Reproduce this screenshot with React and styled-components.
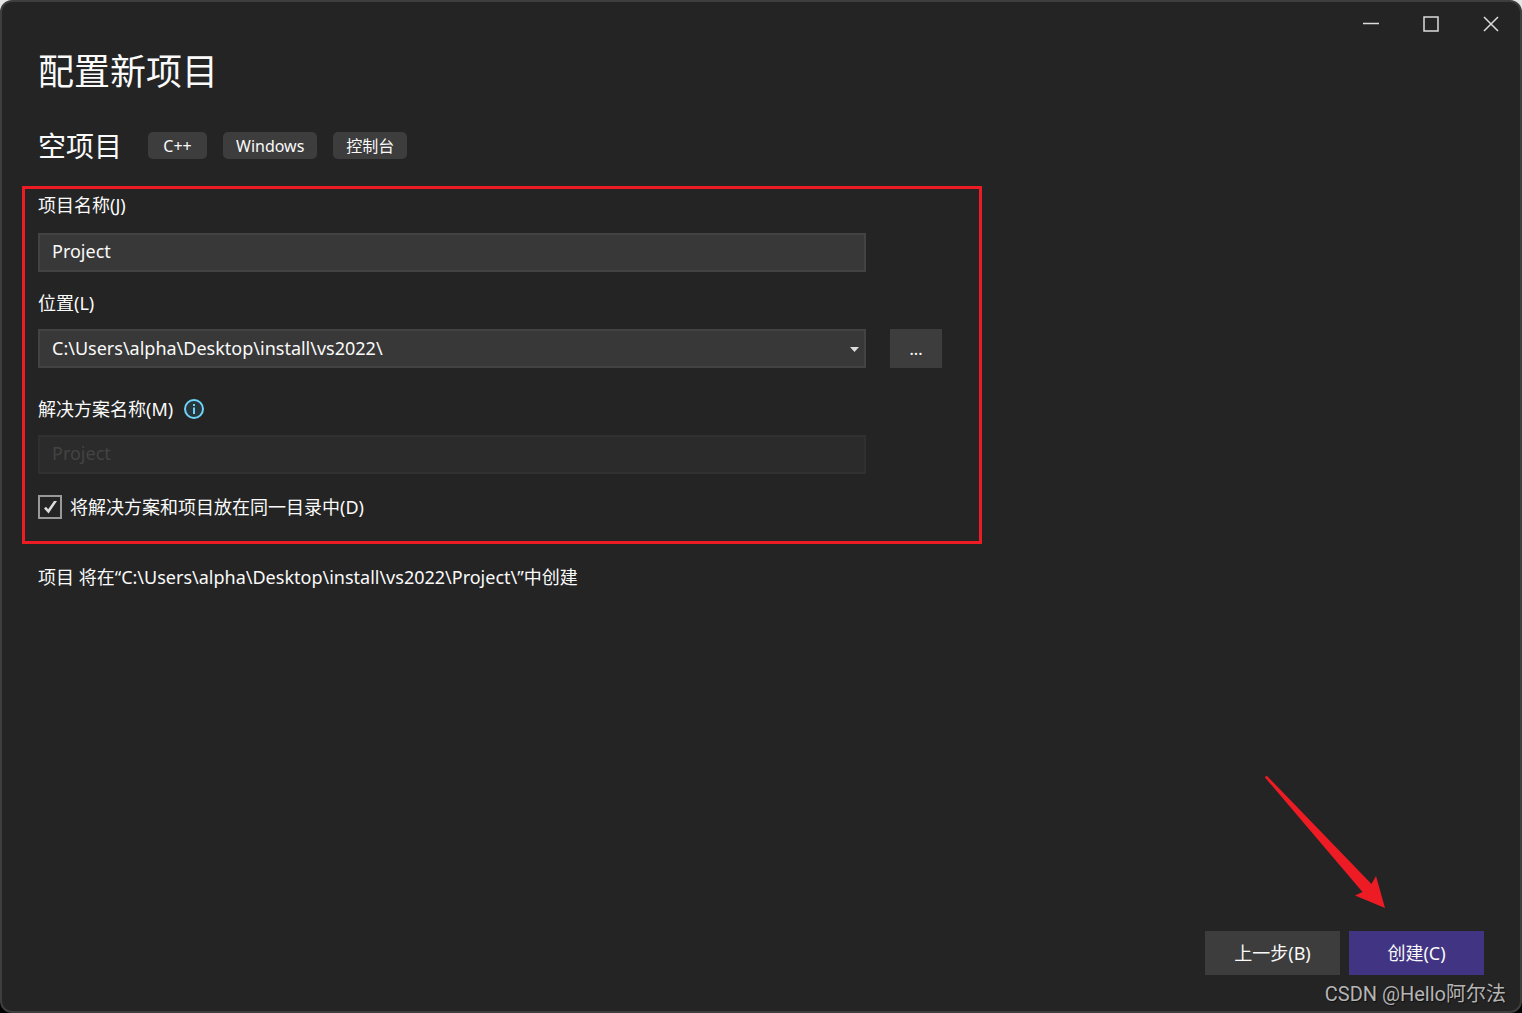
import React, { useState } from 'react';
import styled, { createGlobalStyle } from 'styled-components';

export default () => {
  const [name, setName] = useState('Project');
  const [location, setLocation] = useState('C:\\Users\\alpha\\Desktop\\install\\vs2022\\');
  const [sameDir, setSameDir] = useState(true);

  return (
    <>
      <GlobalStyle />
      <Window>
        <TitleBar>
          <CaptionButton type="button" aria-label="最小化">
            <svg width="16" height="16" viewBox="0 0 16 16">
              <path d="M1 7.5H17" />
            </svg>
          </CaptionButton>
          <CaptionButton type="button" aria-label="最大化">
            <svg width="16" height="16" viewBox="0 0 16 16">
              <rect x="2" y="1" width="14" height="14" />
            </svg>
          </CaptionButton>
          <CaptionButton type="button" aria-label="关闭">
            <svg width="16" height="16" viewBox="0 0 16 16">
              <path d="M2 1L16 15M16 1L2 15" />
            </svg>
          </CaptionButton>
        </TitleBar>

        <Content>
          <Title>配置新项目</Title>
          <TemplateRow>
            <TemplateName>空项目</TemplateName>
            <TagList>
              <Tag>C++</Tag>
              <Tag>Windows</Tag>
              <Tag>控制台</Tag>
            </TagList>
          </TemplateRow>

          <FormPanel>
            <Field $gap={16}>
              <Label htmlFor="name">项目名称(J)</Label>
              <TextInput id="name" value={name} onChange={(e) => setName(e.target.value)} />
            </Field>
            <Field $top={19}>
              <Label htmlFor="location">位置(L)</Label>
              <LocationRow>
                <SelectBox>
                  <Select
                    id="location"
                    value={location}
                    onChange={(e) => setLocation(e.target.value)}
                  >
                    <option value={location}>{location}</option>
                  </Select>
                  <Caret width="10" height="5" viewBox="0 0 10 5">
                    <path d="M0 0H9L4.5 5Z" />
                  </Caret>
                </SelectBox>
                <BrowseButton type="button">...</BrowseButton>
              </LocationRow>
            </Field>
            <Field $top={29}>
              <LabelRow>
                <Label htmlFor="solution">解决方案名称(M)</Label>
                <InfoIcon />
              </LabelRow>
              <TextInput id="solution" value={name} disabled={sameDir} readOnly />
            </Field>
            <CheckLabel>
              <Checkbox
                type="checkbox"
                checked={sameDir}
                onChange={(e) => setSameDir(e.target.checked)}
              />
              <CheckMark $on={sameDir} width="14" height="14" viewBox="0 0 14 14">
                <path d="M1 8.4L3 6.8L5.2 9.2L11 1H14L5.6 13.4Z" />
              </CheckMark>
              将解决方案和项目放在同一目录中(D)
            </CheckLabel>
          </FormPanel>

          <Message>
            项目 将在“{location}
            {name}\”中创建
          </Message>
        </Content>

        <Footer>
          <Arrow width="122" height="134" viewBox="0 0 122 134">
            <path d="M0 2.5Q1 0 3 2L106.5 109L111 101L120 133L90 120.5L97.5 117Z" />
          </Arrow>
          <ActionButton type="button">上一步(B)</ActionButton>
          <ActionButton type="button" $primary>
            创建(C)
          </ActionButton>
        </Footer>
        <Watermark>CSDN @Hello阿尔法</Watermark>
      </Window>
    </>
  );
};

const InfoIcon = () => (
  <svg width="20" height="20" viewBox="0 0 20 20" aria-hidden="true">
    <circle cx="10" cy="10" r="9" fill="#26363c" stroke="#6fd3f7" strokeWidth="2" />
    <path d="M9 5H11V7H9ZM9 8.5H11V15H9Z" fill="#6fd3f7" />
  </svg>
);

const GlobalStyle = createGlobalStyle`
  * {
    box-sizing: border-box;
  }
  body {
    margin: 0;
    background: linear-gradient(#e6e6e6 50%, #000 50%);
    color: #fafafa;
    font-family: "Noto Sans", "Noto Sans CJK SC", sans-serif;
    font-size: 18px;
  }
  button, input, select {
    font: inherit;
    color: inherit;
  }
`;

const Window = styled.div`
  position: relative;
  display: flex;
  flex-direction: column;
  min-height: 100vh;
  border: 2px solid #3e3e3e;
  border-radius: 12px;
  background: #242424;
`;

const TitleBar = styled.header`
  display: flex;
  justify-content: flex-end;
  height: 44px;
`;

const CaptionButton = styled.button`
  display: flex;
  align-items: center;
  justify-content: center;
  width: 60px;
  padding: 0;
  border: 0;
  background: none;

  svg {
    overflow: visible;
    fill: none;
    stroke: #dcdcdc;
    stroke-width: 1.5;
  }
`;

const Content = styled.main`
  flex: 1;
  padding: 0 36px;
`;

const Title = styled.h1`
  margin: 0;
  font-size: 36px;
  font-weight: 400;
  line-height: 52px;
`;

const TemplateRow = styled.div`
  display: flex;
  align-items: center;
  gap: 26px;
  height: 47px;
  margin-top: 24px;
`;

const TemplateName = styled.h2`
  margin: 0;
  padding-top: 2px;
  font-size: 28px;
  font-weight: 400;
  line-height: 45px;
`;

const TagList = styled.div`
  display: flex;
  gap: 16px;
`;

const Tag = styled.span`
  min-width: 59px;
  padding: 2px 13px 0;
  border-radius: 5px;
  background: #3d3d3d;
  font-size: 16px;
  line-height: 25px;
  text-align: center;
`;

const FormPanel = styled.form`
  max-width: 960px;
  margin: 17px 0 0 -16px;
  padding: 4px 13px 22px;
  border: 3px solid #ed1c24;
`;

const Field = styled.div`
  display: flex;
  flex-direction: column;
  gap: ${(p) => p.$gap || 14}px;
  margin-top: ${(p) => p.$top || 0}px;
`;

const Label = styled.label`
  line-height: 24px;
`;

const LabelRow = styled.div`
  display: flex;
  align-items: center;
  gap: 11px;
`;

const TextInput = styled.input`
  width: 100%;
  max-width: 828px;
  height: 39px;
  padding: 0 12px 4px;
  border: 2px solid #434343;
  background: #383838;

  &:disabled {
    border-color: #303030;
    background: #2b2b2b;
    color: #434343;
  }
`;

const LocationRow = styled.div`
  display: flex;
  gap: 24px;
`;

const SelectBox = styled.div`
  position: relative;
  flex: 1;
  max-width: 828px;
`;

const Select = styled.select`
  display: block;
  width: 100%;
  height: 39px;
  padding: 0 32px 2px 12px;
  border: 2px solid #434343;
  border-radius: 0;
  background: #383838;
  appearance: none;
`;

const Caret = styled.svg`
  position: absolute;
  top: 18px;
  right: 6px;
  fill: #dcdcdc;
  pointer-events: none;
`;

const BrowseButton = styled.button`
  width: 52px;
  height: 39px;
  padding: 0;
  border: 0;
  background: #3d3d3d;
  font-size: 16px;
  font-weight: 500;
`;

const CheckLabel = styled.label`
  position: relative;
  display: flex;
  align-items: center;
  gap: 8px;
  width: fit-content;
  margin-top: 21px;
  line-height: 24px;
`;

const Checkbox = styled.input`
  width: 24px;
  height: 24px;
  margin: 0;
  border: 2px solid #999;
  background: #242424;
  appearance: none;
`;

const CheckMark = styled.svg`
  position: absolute;
  top: 5px;
  left: 5px;
  visibility: ${(p) => (p.$on ? 'visible' : 'hidden')};
  fill: #dcdcdc;
  pointer-events: none;
`;

const Message = styled.p`
  margin: 21px 0 0;
  line-height: 24px;
`;

const Footer = styled.footer`
  position: relative;
  display: flex;
  justify-content: flex-end;
  gap: 9px;
  padding: 0 36px 36px;
`;

const ActionButton = styled.button`
  width: 135px;
  height: 44px;
  padding: 0 0 2px;
  border: 0;
  background: ${(p) => (p.$primary ? '#413482' : '#3d3d3d')};
`;

const Arrow = styled.svg`
  position: absolute;
  right: 133px;
  bottom: 102px;
  fill: #ed1c24;
  pointer-events: none;
`;

const Watermark = styled.span`
  position: absolute;
  right: 14px;
  bottom: 3px;
  color: #b4b4b4;
  font-family: Roboto, "Noto Sans CJK SC", sans-serif;
  font-size: 20px;
  line-height: 28px;
  text-shadow: 1px 1px 1px #111;
`;
